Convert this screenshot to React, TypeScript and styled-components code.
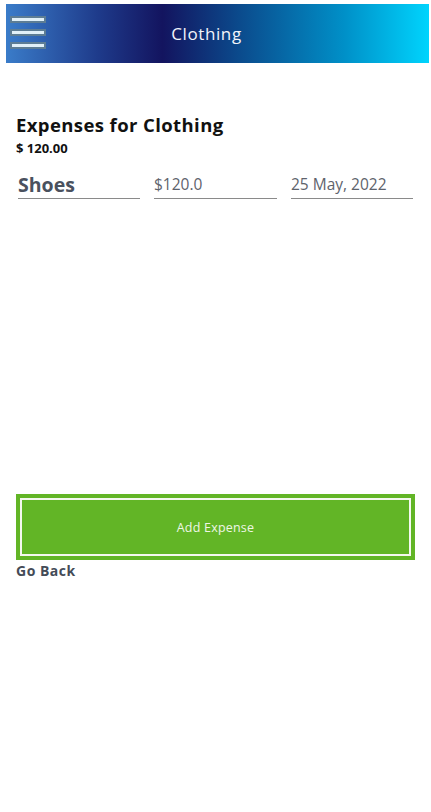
import React from "react";
import styled, { createGlobalStyle } from "styled-components";

const Global = createGlobalStyle`
  html, body { margin: 0; padding: 0; background: #fff; }
  body { font-family: "Open Sans", "Liberation Sans", sans-serif; }
`;

const Page = styled.div`
  display: flex;
  flex-direction: column;
  padding: 4px 2px 0 6px;
  min-height: 812px;
  box-sizing: border-box;
`;

const Header = styled.header`
  position: relative;
  height: 59px;
  display: flex;
  align-items: center;
  justify-content: center;
  background: linear-gradient(to right, #3a7cc9 0%, #1e3a8a 22%, #13145f 37%, #0b4a8c 55%, #0090c8 80%, #00d4fd 100%);
`;

const Burger = styled.button`
  position: absolute;
  left: 4px;
  top: 12px;
  display: flex;
  flex-direction: column;
  gap: 6px;
  padding: 0;
  border: none;
  background: none;
`;

const Bar = styled.span`
  display: block;
  width: 32px;
  height: 3px;
  background: #e0f0f8;
  border: 2px solid #5d7d94;
`;

const Title = styled.h1`
  margin: 0 0 0 -22px;
  font-size: 17px;
  font-weight: 400;
  color: #f2f4fa;
  letter-spacing: 0.6px;
`;

const Content = styled.main`
  display: flex;
  flex-direction: column;
  padding: 50px 14px 0 10px;
`;

const Heading = styled.h2`
  margin: 0;
  font-size: 18.5px;
  font-weight: 700;
  color: #111;
  line-height: 24px;
  letter-spacing: 0.4px;
`;

const Total = styled.div`
  margin-top: 2px;
  font-size: 13px;
  font-weight: 700;
  color: #111;
  line-height: 18px;
`;

const Row = styled.div`
  display: grid;
  grid-template-columns: 122px 123px 122px;
  column-gap: 14px;
  margin: 17px 0 0 2px;
`;

const Field = styled.div<{ $bold?: boolean }>`
  height: 25px;
  border-bottom: 1px solid #8a8a8a;
  display: flex;
  align-items: flex-end;
  font-size: ${(p) => (p.$bold ? "19.5px" : "15.5px")};
  font-weight: ${(p) => (p.$bold ? 700 : 400)};
  color: ${(p) => (p.$bold ? "#4a515e" : "#5e636c")};
  line-height: ${(p) => (p.$bold ? "27px" : "22px")};
  padding-bottom: ${(p) => (p.$bold ? "0" : "3px")};
  box-sizing: border-box;
  white-space: nowrap;
`;

const AddButton = styled.button`
  margin-top: 295px;
  height: 66px;
  width: 399px;
  background: #62b526;
  border: 4px solid #62b526;
  padding: 0;
  display: flex;
  cursor: pointer;
`;

const Inner = styled.span`
  flex: 1;
  border: 2px solid #f4f8ef;
  display: flex;
  align-items: center;
  justify-content: center;
  font-family: "Open Sans", "Liberation Sans", sans-serif;
  font-size: 12.5px;
  color: #eef6e6;
  letter-spacing: 0.2px;
`;

const Back = styled.a`
  margin-top: 1px;
  font-size: 14px;
  font-weight: 700;
  color: #444b57;
  line-height: 20px;
  letter-spacing: 0.5px;
  cursor: pointer;
`;

export default function App() {
  return (
    <>
      <Global />
      <Page>
        <Header>
          <Burger aria-label="menu">
            <Bar />
            <Bar />
            <Bar />
          </Burger>
          <Title>Clothing</Title>
        </Header>
        <Content>
          <Heading>Expenses for Clothing</Heading>
          <Total>$ 120.00</Total>
          <Row>
            <Field $bold>Shoes</Field>
            <Field>$120.0</Field>
            <Field>25 May, 2022</Field>
          </Row>
          <AddButton>
            <Inner>Add Expense</Inner>
          </AddButton>
          <Back>Go Back</Back>
        </Content>
      </Page>
    </>
  );
}
